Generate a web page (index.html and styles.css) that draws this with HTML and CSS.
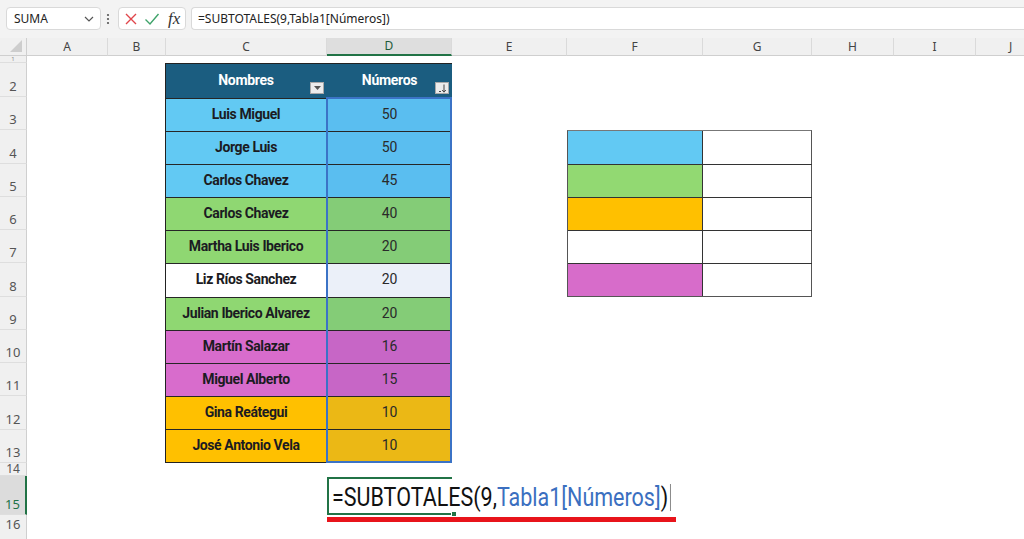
FILE: index.html
```html
<!DOCTYPE html>
<html lang="es">
<head>
<meta charset="utf-8">
<title>Excel</title>
<link rel="stylesheet" href="styles.css">
</head>
<body>
<div class="topbar">
  <div class="namebox">
    <span class="nb-text">SUMA</span>
    <svg class="chev" width="10" height="6" viewBox="0 0 10 6"><path d="M1 1 L5 5 L9 1" fill="none" stroke="#555" stroke-width="1.2"/></svg>
  </div>
  <svg class="dots" width="4" height="12" viewBox="0 0 4 12"><circle cx="2" cy="2" r="1.1" fill="#555"/><circle cx="2" cy="6" r="1.1" fill="#555"/><circle cx="2" cy="10" r="1.1" fill="#555"/></svg>
  <div class="fxbox">
    <svg width="14" height="14" viewBox="0 0 14 14"><path d="M2 2 L12 12 M12 2 L2 12" stroke="#e0464b" stroke-width="1.4" fill="none"/></svg>
    <svg width="16" height="14" viewBox="0 0 16 14"><path d="M1.5 7.5 L6 12 L14.5 2" stroke="#3fa36a" stroke-width="1.4" fill="none"/></svg>
    <span class="fx">fx</span>
  </div>
  <div class="formula">=SUBTOTALES(9,Tabla1[Números])</div>
</div>

<div class="sheet">
  <div class="corner"><svg width="12" height="12" viewBox="0 0 12 12"><path d="M12 0 L12 12 L0 12 Z" fill="#cdcdcd"/></svg></div>
  <div class="ch">A</div>
  <div class="ch">B</div>
  <div class="ch">C</div>
  <div class="ch ch-active">D</div>
  <div class="ch">E</div>
  <div class="ch">F</div>
  <div class="ch">G</div>
  <div class="ch">H</div>
  <div class="ch">I</div>
  <div class="ch ch-last">J</div>

  <div class="rh r1">1</div>
  <div class="rh r2">2</div>
  <div class="rh r3">3</div>
  <div class="rh r4">4</div>
  <div class="rh r5">5</div>
  <div class="rh r6">6</div>
  <div class="rh r7">7</div>
  <div class="rh r8">8</div>
  <div class="rh r9">9</div>
  <div class="rh r10">10</div>
  <div class="rh r11">11</div>
  <div class="rh r12">12</div>
  <div class="rh r13">13</div>
  <div class="rh r14">14</div>
  <div class="rh r15 rh-active">15</div>
  <div class="rh r16">16</div>

  <div class="table">
    <div class="th th-c">Nombres<span class="filter"><svg width="7" height="4" viewBox="0 0 7 4"><path d="M0 0 L7 0 L3.5 4 Z" fill="#555"/></svg></span></div>
    <div class="th th-d">Números<span class="filter"><svg width="9" height="9" viewBox="0 0 9 9"><path d="M6 0.5 L6 8 M4.2 6 L6 8.2 L7.8 6 M1 7.5 L3 7.5" stroke="#444" stroke-width="1" fill="none"/></svg></span></div>

    <div class="c blue">Luis Miguel</div><div class="d blue-d">50</div>
    <div class="c blue">Jorge Luis</div><div class="d blue-d">50</div>
    <div class="c blue">Carlos Chavez</div><div class="d blue-d">45</div>
    <div class="c green">Carlos Chavez</div><div class="d green-d">40</div>
    <div class="c green">Martha Luis Iberico</div><div class="d green-d">20</div>
    <div class="c white">Liz Ríos Sanchez</div><div class="d white-d">20</div>
    <div class="c green">Julian Iberico Alvarez</div><div class="d green-d">20</div>
    <div class="c purple">Martín Salazar</div><div class="d purple-d">16</div>
    <div class="c purple">Miguel Alberto</div><div class="d purple-d">15</div>
    <div class="c orange">Gina Reátegui</div><div class="d orange-d">10</div>
    <div class="c orange">José Antonio Vela</div><div class="d orange-d">10</div>
    <div class="selection"></div>
  </div>

  <div class="legend">
    <div class="lg blue"></div><div class="lg"></div>
    <div class="lg green-l"></div><div class="lg"></div>
    <div class="lg orange"></div><div class="lg"></div>
    <div class="lg"></div><div class="lg"></div>
    <div class="lg purple-l"></div><div class="lg"></div>
  </div>

  <div class="active-cell">
    <span class="ftext">=SUBTOTALES(9,<span class="ref">Tabla1[Números]</span>)<span class="caret"></span></span>
    <span class="handle"></span>
  </div>
  <div class="redline"></div>
</div>
</body>
</html>
```
FILE: styles.css
```css
* { box-sizing: border-box; }
html, body { margin: 0; padding: 0; }
body {
  width: 1024px;
  height: 539px;
  overflow: hidden;
  background: #ffffff;
  font-family: "Noto Sans", "Open Sans", sans-serif;
}

/* ---------- top bar ---------- */
.topbar {
  height: 38px;
  background: #f3f3f3;
  display: flex;
  align-items: flex-start;
  padding: 7px 0 0 6px;
}
.namebox {
  width: 95px;
  height: 23px;
  background: #fff;
  border: 1px solid #d9d9d9;
  border-radius: 4px;
  display: flex;
  align-items: center;
  justify-content: space-between;
  padding: 0 6px 0 7px;
}
.nb-text { font-size: 12px; color: #222; }
.dots { margin: 6px 0 0 5px; }
.fxbox {
  margin-left: 8px;
  width: 68px;
  height: 23px;
  background: #fff;
  border: 1px solid #d9d9d9;
  border-radius: 4px;
  display: flex;
  align-items: center;
  gap: 6px;
  padding-left: 5px;
}
.fx {
  font-family: "Liberation Serif", serif;
  font-style: italic;
  font-size: 17px;
  color: #333;
  margin-left: 2px;
  line-height: 1;
}
.formula {
  margin-left: 5px;
  flex: 1;
  height: 23px;
  background: #fff;
  border: 1px solid #d9d9d9;
  border-right: none;
  border-radius: 4px 0 0 4px;
  font-size: 12px;
  color: #222;
  display: flex;
  align-items: center;
  padding-left: 6px;
}

/* ---------- sheet grid ---------- */
.sheet {
  display: grid;
  grid-template-columns: 27px 81px 58px 161px 125px 115px 136px 109px 82px 82px 1fr;
  grid-template-rows: 18px 7px 34px repeat(11, 33.27px) 13px 39px 1fr;
  height: 501px;
}
.corner {
  background: #f0f0f0;
  border-bottom: 1px solid #cfcfcf;
  border-right: 1px solid #cfcfcf;
  display: flex;
  align-items: flex-end;
  justify-content: flex-end;
  padding: 0 4px 3px 0;
}
.ch {
  background: #f0f0f0;
  border-bottom: 1px solid #cfcfcf;
  border-right: 1px solid #dadada;
  font-size: 12px;
  color: #444;
  display: flex;
  align-items: center;
  justify-content: center;
  line-height: 1;
}
.ch-last { border-right: none; justify-content: flex-start; padding-left: 33px; }
.ch-active {
  background: #dedede;
  border-bottom: 2px solid #217346;
  color: #1d5a38;
}

.rh {
  grid-column: 1;
  background: #f0f0f0;
  border-right: 1px solid #cfcfcf;
  border-bottom: 1px solid #dedede;
  font-size: 13px;
  color: #555;
  display: flex;
  align-items: flex-end;
  justify-content: center;
  line-height: 1;
  padding-bottom: 3px;
  overflow: hidden;
}
.r1 { grid-row: 2; font-size: 6px; line-height: 6px; padding-bottom: 0; align-items: center; color: #888; overflow: visible; }
.r2 { grid-row: 3; }
.r3 { grid-row: 4; }
.r4 { grid-row: 5; }
.r5 { grid-row: 6; }
.r6 { grid-row: 7; }
.r7 { grid-row: 8; }
.r8 { grid-row: 9; }
.r9 { grid-row: 10; }
.r10 { grid-row: 11; }
.r11 { grid-row: 12; }
.r12 { grid-row: 13; }
.r13 { grid-row: 14; }
.r14 { grid-row: 15; padding-bottom: 0; align-items: center; font-size: 12px; line-height: 12px; overflow: visible; }
.r15 { grid-row: 16; }
.r16 { grid-row: 17; align-items: flex-start; padding-top: 3px; border-bottom: none; }
.rh-active {
  background: #dcdcdc;
  color: #217346;
  border-right: 2px solid #217346;
}

/* ---------- data table ---------- */
.table {
  grid-column: 4 / 6;
  grid-row: 3 / 15;
  position: relative;
  display: grid;
  grid-template-columns: 161px 125px;
  grid-template-rows: 34px repeat(11, 1fr);
  border: 1px solid #222;
  margin-left: -1px;
  font-family: Roboto, "Liberation Sans", sans-serif;
  font-size: 14px;
  color: #1b1b22;
}
.th {
  background: #1b5d80;
  color: #fff;
  font-weight: bold;
  letter-spacing: -0.3px;
  position: relative;
  display: flex;
  align-items: center;
  justify-content: center;
  padding-bottom: 3px;
}
.th-c { border-right: 1px solid #1b5d80; }
.filter {
  position: absolute;
  right: 2px;
  top: 18px;
  width: 14px;
  height: 12px;
  background: #ececec;
  border: 1px solid #a8a8a8;
  display: flex;
  align-items: center;
  justify-content: center;
}
.th-d .filter { right: 3px; }
.c, .d {
  border-top: 1px solid #262626;
  display: flex;
  align-items: center;
  justify-content: center;
  padding-bottom: 2px;
}
.c { font-weight: bold; letter-spacing: -0.4px; border-right: 1px solid #262626; }
.d { color: #2a2a2a; }

.blue { background: #62c9f3; }
.blue-d { background: #5abef0; }
.green { background: #8fd772; }
.green-d { background: #84cc77; }
.white { background: #ffffff; }
.white-d { background: #ebf0f9; }
.purple { background: #d86ccc; }
.purple-d { background: #c766c6; }
.orange { background: #ffc000; }
.orange-d { background: #ebb815; }

.selection {
  position: absolute;
  left: 160px;
  top: 33px;
  right: -1px;
  bottom: -1px;
  border: 2px solid #3b73c6;
  pointer-events: none;
}

/* ---------- colour legend ---------- */
.legend {
  grid-column: 7 / 9;
  grid-row: 5 / 10;
  display: grid;
  grid-template-columns: 135px 109px;
  grid-template-rows: repeat(5, 1fr);
  border: 1px solid #555;
  border-top-color: #777;
}
.lg {
  border-top: 1px solid #333;
}
.lg:nth-child(odd) { border-right: 1px solid #333; }
.lg:nth-child(1), .lg:nth-child(2) { border-top: none; }
.green-l { background: #92d972; }
.purple-l { background: #d76cca; }

/* ---------- active cell with formula ---------- */
.active-cell {
  grid-column: 5;
  grid-row: 16;
  position: relative;
  margin-top: 1px;
  border: 2px solid #217346;
  border-right: none;
  display: flex;
  align-items: flex-end;
  white-space: nowrap;
  overflow: visible;
  padding: 0 0 2px 3px;
  font-family: Roboto, "Liberation Sans", sans-serif;
  font-size: 25px;
  line-height: 25px;
  color: #111;
}
.ftext {
  display: inline-block;
  transform: scaleX(0.86);
  transform-origin: left bottom;
}
.ref { color: #3b6fc0; }
.caret {
  display: inline-block;
  width: 1.2px;
  height: 27px;
  background: #777;
  margin-left: 2px;
  vertical-align: -5px;
}
.handle {
  position: absolute;
  left: 122px;
  bottom: -4px;
  width: 6px;
  height: 6px;
  background: #217346;
  border: 1px solid #fff;
}
.redline {
  grid-column: 5 / 9;
  grid-row: 17;
  align-self: start;
  margin-top: 2px;
  width: 349px;
  height: 5px;
  background: #e8141b;
}
```
